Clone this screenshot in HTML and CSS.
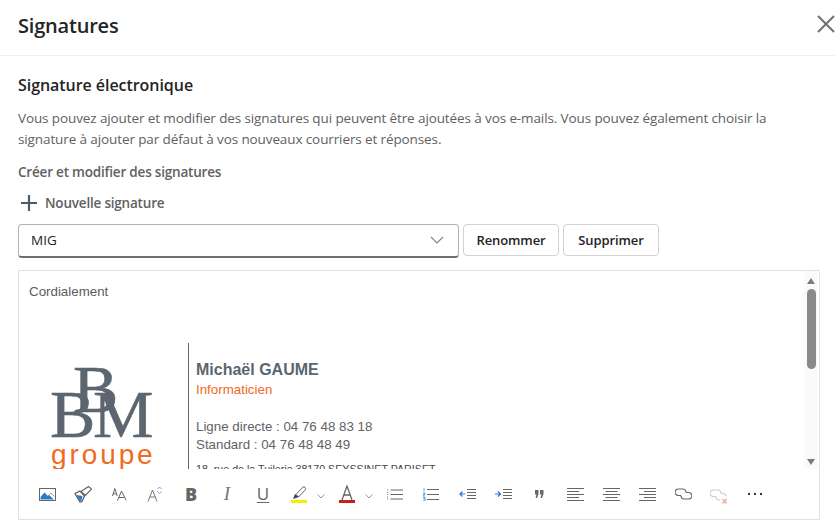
FILE: index.html
```html
<!DOCTYPE html>
<html lang="fr">
<head>
<meta charset="utf-8">
<title>Signatures</title>
<link rel="stylesheet" href="styles.css">
</head>
<body>
<div class="dialog">
  <header class="head">
    <h1 class="title">Signatures</h1>
    <svg class="close" width="18" height="18" viewBox="0 0 18 18"><path d="M1 1l16 16M17 1L1 17" stroke="#707070" stroke-width="2" fill="none"/></svg>
  </header>
  <main class="body">
    <h2 class="section">Signature électronique</h2>
    <p class="intro">Vous pouvez ajouter et modifier des signatures qui peuvent être ajoutées à vos e-mails. Vous pouvez également choisir la signature à ajouter par défaut à vos nouveaux courriers et réponses.</p>
    <div class="label">Créer et modifier des signatures</div>
    <div class="new">
      <svg width="18" height="18" viewBox="0 0 18 18"><path d="M9 1v16M1 9h16" stroke="#4f5a66" stroke-width="2.200" fill="none"/></svg>
      <span>Nouvelle signature</span>
    </div>
    <div class="controls">
      <div class="select"><span>MIG</span>
        <svg width="14" height="8" viewBox="0 0 14 8"><path d="M1 1l6 6 6-6" stroke="#8c8078" stroke-width="1.100" fill="none"/></svg>
      </div>
      <button class="btn btn-r">Renommer</button>
      <button class="btn btn-s">Supprimer</button>
    </div>
    <section class="editor">
      <div class="scroll">
        <div class="content">
          <div class="greet">Cordialement</div>
          <div class="sig">
            <div class="logo">
              <svg width="110" height="112" viewBox="0 0 110 112">
                <g class="letters">
                  <text x="22" y="51" class="big">B</text>
                  <text x="-1" y="76" class="big">B</text>
                  <text x="42" y="76" class="big">M</text>
                </g>
                <text x="0" y="103" class="grp">groupe</text>
              </svg>
            </div>
            <div class="info">
              <div class="name">Michaël GAUME</div>
              <div class="job">Informaticien</div>
              <div class="phone first">Ligne directe : 04 76 48 83 18</div>
              <div class="phone">Standard : 04 76 48 48 49</div>
              <div class="addr">18, rue de la Tuilerie 38170 SEYSSINET PARISET</div>
            </div>
          </div>
        </div>
        <div class="bar">
          <span class="arrow-up"></span>
          <span class="thumb"></span>
          <span class="arrow-down"></span>
        </div>
      </div>
      <div class="toolbar">
        <span class="cell"><svg width="17" height="13" viewBox="0 0 17 13"><rect x=".5" y=".5" width="16" height="12" fill="none" stroke="#666"/><path d="M1.500 9L5.500 4.500 9 8l1-1 5 4.500H1.500z" fill="#2b78d0"/><path d="M9 8l3-3 3.500 3.500" fill="none" stroke="#888" stroke-width=".8"/></svg></span>
        <span class="cell"><svg width="18" height="17" viewBox="0 0 18 17"><path d="M1 7.500l5-2.500 4.500 5L8 15.500 6 16z" fill="#fff" stroke="#555" stroke-width="1.200"/><path d="M2.500 9l6 1L7.500 14.500 6 15z" fill="#2b78d0"/><path d="M7 5.500l7.500-5 3 2.500-6 6.500z" fill="#fff" stroke="#666" stroke-width="1.200"/></svg></span>
        <span class="cell"><svg width="15" height="13" viewBox="0 0 15 13"><path d="M.5 8L2.800.5 5.200 8M1.200 5.800h3.200M5.500 12.500L9.500 3l4.700 9.500M7 9.500h5" fill="none" stroke="#666" stroke-width="1"/></svg></span>
        <span class="cell"><svg width="16" height="16" viewBox="0 0 16 16"><path d="M1 15.500L5.500 4 10 15.500M2.800 11h5.500" fill="none" stroke="#777" stroke-width="1"/><path d="M10.500 3L12.500 1l2 2M10.500 5.500l2 2 2-2" fill="none" stroke="#5a9be0" stroke-width=".9"/></svg></span>
        <span class="cell b">B</span>
        <span class="cell it">I</span>
        <span class="cell un">U</span>
        <span class="cell wide"><svg width="16" height="18" viewBox="0 0 16 18"><path d="M5 9.500l7-7.500c1-1 3.500 1 2.500 2.500l-7 7.500z" fill="#fff" stroke="#666" stroke-width="1"/><path d="M2 14l2-5 4 3z" fill="#444"/><rect y="15" width="16" height="3" fill="#f6ee00"/></svg><svg class="chev" width="8" height="5" viewBox="0 0 8 5"><path d="M.5.500L4 4 7.500.500" stroke="#999" fill="none"/></svg></span>
        <span class="cell wide"><svg width="16" height="18" viewBox="0 0 16 18"><path d="M3 15L8 1l5 14M4.800 10h6.400" fill="none" stroke="#666" stroke-width="1.300"/><rect y="15" width="16" height="3" fill="#c8201a"/></svg><svg class="chev" width="8" height="5" viewBox="0 0 8 5"><path d="M.5.500L4 4 7.500.500" stroke="#999" fill="none"/></svg></span>
        <span class="cell"><svg width="16" height="11" viewBox="0 0 16 11"><path d="M3.500 1H16M3.500 5.500H16M3.500 10H16" stroke="#666" fill="none"/><path d="M0 1h1.200M0 3.500h1.200M0 5.500h1.200M0 8h1.200M0 10h1.200" stroke="#4a8ad8" stroke-width=".9"/></svg></span>
        <span class="cell"><svg width="16" height="13" viewBox="0 0 16 13"><path d="M4 1.500h12M4 6.500h12M4 11.500h12" stroke="#666" fill="none"/><path d="M1 0v3.500M0 5h2v1.500H0V8h2M0 9.500h2v3.500H0M0 11h2" stroke="#4a8ad8" fill="none" stroke-width=".8"/></svg></span>
        <span class="cell"><svg width="17" height="10" viewBox="0 0 17 10"><path d="M8 .5h9M8 3.500h9M8 6.500h9M8 9.500h9" stroke="#666" fill="none"/><path d="M6 5H1M3.500 2.500L1 5l2.500 2.500" stroke="#2b78d0" stroke-width="1.200" fill="none"/></svg></span>
        <span class="cell"><svg width="17" height="10" viewBox="0 0 17 10"><path d="M8 .5h9M8 3.500h9M8 6.500h9M8 9.500h9" stroke="#666" fill="none"/><path d="M0 5h5M3 2.500L5.500 5 3 7.500" stroke="#2b78d0" stroke-width="1.200" fill="none"/></svg></span>
        <span class="cell"><svg width="9" height="8" viewBox="0 0 9 8"><path d="M0 0h3.500v4L2 8H.5l1-3.500H0zM5 0h3.500v4L7 8H5.500l1-3.500H5z" fill="#666"/></svg></span>
        <span class="cell"><svg width="17" height="13" viewBox="0 0 17 13"><path d="M0 .5h17M0 3.500h12M0 6.500h17M0 9.500h12M0 12.500h17" stroke="#666" fill="none"/></svg></span>
        <span class="cell"><svg width="17" height="13" viewBox="0 0 17 13"><path d="M0 .5h17M2.500 3.500h12M0 6.500h17M2.500 9.500h12M0 12.500h17" stroke="#666" fill="none"/></svg></span>
        <span class="cell"><svg width="17" height="13" viewBox="0 0 17 13"><path d="M0 .5h17M5 3.500h12M0 6.500h17M5 9.500h12M0 12.500h17" stroke="#666" fill="none"/></svg></span>
        <span class="cell"><svg width="17" height="12" viewBox="0 0 17 12"><path d="M6 7.500H4a3.300 3.300 0 1 1 0-6.500h4a3.400 3.400 0 0 1 3 3.500" fill="none" stroke="#666" stroke-width="1.100"/><path d="M11 4.500h2a3.300 3.300 0 1 1 0 6.500H9a3.400 3.400 0 0 1-3-3.500" fill="none" stroke="#666" stroke-width="1.100"/></svg></span>
        <span class="cell"><svg class="unlink" width="18" height="15" viewBox="0 0 18 15"><path d="M6 7.500H4a3.300 3.300 0 1 1 0-6.500h4a3.400 3.400 0 0 1 3 3.500" fill="none" stroke="#ccc" stroke-width="1.100"/><path d="M11 4.500h2a3.300 3.300 0 0 1 3 3M10 11H9a3.400 3.400 0 0 1-3-3.500" fill="none" stroke="#ccc" stroke-width="1.100"/><path d="M12.500 10l4 4.500M16.500 10l-4 4.500" stroke="#f0a79c" stroke-width="1.300"/></svg></span>
        <span class="cell dots"><i></i><i></i><i></i></span>
      </div>
    </section>
  </main>
</div>
</body>
</html>
```
FILE: styles.css
```css
* { box-sizing: border-box; }
html, body { margin: 0; height: 100%; background: #fff; overflow: hidden; }
body { font-family: "Open Sans", "Noto Sans", sans-serif; color: #242424; }
.dialog { width: 835px; height: 526px; display: flex; flex-direction: column; }
.head { height: 56px; border-bottom: 1px solid #eeeeee; display: flex; align-items: center; justify-content: space-between; padding: 0 0 0 18px; }
.title { margin: 0 0 4px; font-size: 20px; font-weight: 600; line-height: 26px; letter-spacing: -.2px; color: #242424; }
.close { margin-bottom: 8px; flex: none; }
.body { padding: 0 15px 0 18px; flex: 1; display: flex; flex-direction: column; }
.section { margin: 18px 0 0; font-size: 16px; line-height: 22px; font-weight: 600; letter-spacing: -.05px; color: #242424; }
.intro { margin: 12px 0 0; font-size: 13.5px; line-height: 21px; color: #616161; width: 770px; letter-spacing: -.11px; }
.label { margin-top: 12px; font-size: 13.5px; line-height: 20px; font-weight: 600; color: #616161; letter-spacing: -.2px; }
.new { margin-top: 10px; height: 22px; display: flex; align-items: center; gap: 7px; padding-left: 2px; font-size: 13.5px; font-weight: 600; color: #616161; letter-spacing: -.2px; }
.controls { margin-top: 10px; display: flex; gap: 4px; align-items: flex-start; }
.select { width: 441px; height: 34px; border: 1px solid #b3b3b3; border-bottom: 2px solid #6b6f75; border-radius: 4px; display: flex; align-items: center; justify-content: space-between; padding: 0 14px 2px 12px; font-size: 13.5px; color: #242424; }
.btn { width: 96px; height: 32px; border: 1px solid #d1d1d1; border-radius: 4px; background: #fff; font-family: inherit; font-size: 13px; font-weight: 600; color: #242424; letter-spacing: -.1px; padding: 0; }
.editor { margin-top: 12px; width: 802px; height: 250px; border: 1px solid #e1e1e1; display: flex; flex-direction: column; }
.scroll { height: 198px; flex: none; display: flex; overflow: hidden; }
.content { flex: 1; overflow: hidden; font-family: "Liberation Sans", Arial, sans-serif; color: #5f6368; }
.greet { margin: 13px 0 0 10px; font-size: 13.33px; line-height: 15px; color: #5c5c5c; }
.sig { margin-top: 44px; display: flex; }
.logo { width: 169px; padding: 18px 0 0 32px; flex: none; }
.logo svg { display: block; }
.letters { fill: #5b6670; stroke: #5b6670; stroke-width: .5px; }
.big { font-family: "Liberation Serif", serif; font-size: 68px; }
.grp { font-family: "Liberation Sans", sans-serif; font-size: 28px; letter-spacing: 2.9px; fill: #f26a21; }
.info { border-left: 1px solid #5b6670; padding: 17px 0 0 7px; height: 140px; flex: 1; }
.name { font-size: 16px; font-weight: 700; line-height: 20px; color: #5b6670; }
.job { font-size: 13.33px; line-height: 19px; color: #f26a21; }
.phone { font-size: 13.33px; line-height: 18px; color: #5f6368; }
.first { margin-top: 19px; }
.addr { margin-top: 8px; font-size: 10.67px; line-height: 14px; color: #444; }
.bar { width: 14px; margin-right: 1px; background: #fafafa; flex: none; display: flex; flex-direction: column; align-items: center; }
.arrow-up { margin-top: 7px; border: 4px solid transparent; border-top: 0; border-bottom: 6px solid #7b7b7b; }
.thumb { margin-top: 5px; width: 9px; height: 80px; border-radius: 5px; background: #8a8a8a; }
.arrow-down { margin-top: auto; margin-bottom: 4px; border: 4px solid transparent; border-bottom: 0; border-top: 6px solid #7b7b7b; }
.toolbar { flex: 1; display: flex; align-items: center; padding-left: 10px; }
.cell { flex: none; width: 36px; height: 20px; display: flex; align-items: center; justify-content: center; color: #666; }
.wide { width: 48px; justify-content: flex-start; padding-left: 10px; }
.chev { margin: 4px 0 0 10px; flex: none; }
.unlink { margin-top: 5px; }
.b { font: 800 18px/20px "Open Sans", sans-serif; }
.it { font: italic 400 19px/20px "Liberation Serif", serif; color: #777; }
.un { font: 400 17px/20px "Open Sans", sans-serif; text-decoration: underline; text-underline-offset: 2px; text-decoration-thickness: 1px; }
.dots { gap: 4px; }
.dots i { width: 2px; height: 2px; background: #333; display: block; }
```
